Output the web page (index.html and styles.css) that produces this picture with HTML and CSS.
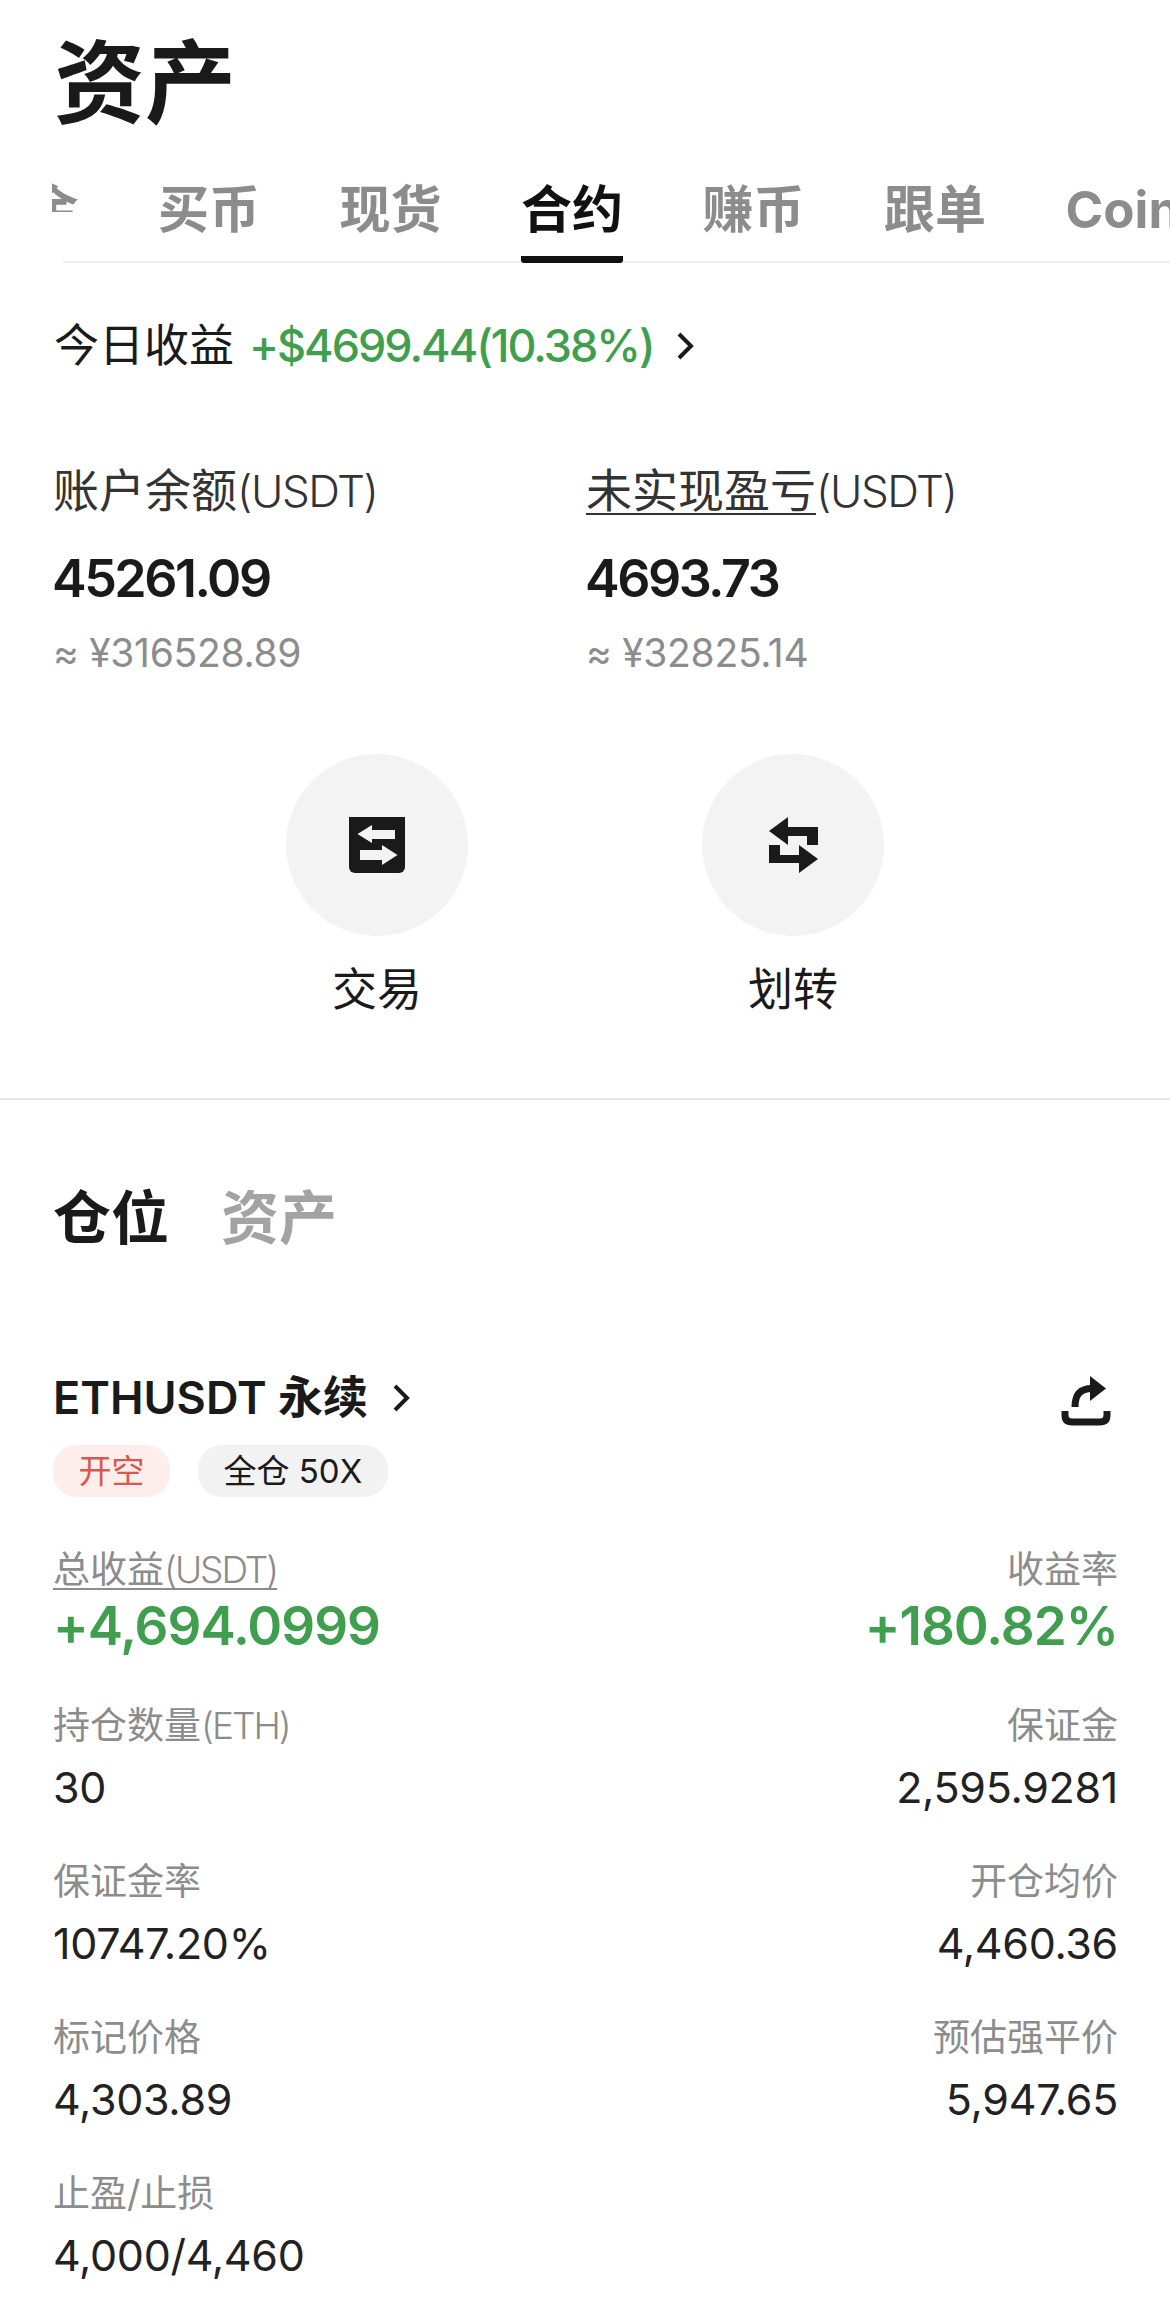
FILE: index.html
```html
<!DOCTYPE html>
<html lang="zh-CN">
<head>
<meta charset="utf-8">
<title>资产</title>
<link rel="stylesheet" href="styles.css">
</head>
<body>
<main class="page">
  <h1 class="title">资产</h1>
  <nav class="tabs">
    <span class="tab tab-clipped"><span class="tab-clip">资金</span></span>
    <span class="tab">买币</span>
    <span class="tab">现货</span>
    <span class="tab tab-active">合约</span>
    <span class="tab">赚币</span>
    <span class="tab">跟单</span>
    <span class="tab">Coin</span>
  </nav>

  <div class="today">
    <span>今日收益</span>
    <span class="today-value">+$4699.44(10.38%)</span>
    <svg class="chev chev-today" viewBox="0 0 18 28"><path d="M3 2l12 12L3 26"/></svg>
  </div>

  <section class="balances">
    <div class="balance">
      <div class="balance-label">账户余额<span class="latin">(USDT)</span></div>
      <div class="balance-value">45261.09</div>
      <div class="balance-fiat">≈ ¥316528.89</div>
    </div>
    <div class="balance">
      <div class="balance-label"><u>未实现盈亏</u><span class="latin">(USDT)</span></div>
      <div class="balance-value">4693.73</div>
      <div class="balance-fiat">≈ ¥32825.14</div>
    </div>
  </section>

  <section class="actions">
    <div class="action">
      <div class="action-circle">
        <svg class="icon-trade" viewBox="0 0 56 56">
          <path class="fill-dark" d="M0 0h56v50a6 6 0 0 1-6 6H6a6 6 0 0 1-6-6z"/>
          <path class="fill-light" d="M8.500 17L23 8v5h23v9H23v4z"/>
          <path class="fill-light" d="M48.500 38L33 28v5H11v10h22v5z"/>
        </svg>
      </div>
      <div class="action-label">交易</div>
    </div>
    <div class="action">
      <div class="action-circle">
        <svg class="icon-transfer" viewBox="0 0 49 56">
          <path class="fill-dark" d="M0 14L19 0v10h30v18H38v-9H19v9z"/>
          <path class="fill-dark" d="M49 42L30 56V46H0V28h11v10h19V28z"/>
        </svg>
      </div>
      <div class="action-label">划转</div>
    </div>
  </section>

  <section class="positions">
    <div class="seg">
      <span class="seg-item seg-active">仓位</span>
      <span class="seg-item">资产</span>
    </div>

    <div class="pos-head">
      <div class="pos-name"><span>ETHUSDT 永续</span><svg class="chev chev-pos" viewBox="0 0 18 28"><path d="M3 2l12 12L3 26"/></svg></div>
      <svg class="icon-share" viewBox="0 0 50 52">
        <path class="fill-dark" d="M29 2l16 12.500L29 27z"/>
        <path class="stroke-dark" d="M31 14.500C19 14.500 14 21 14 33"/>
        <path class="stroke-dark" d="M4 37v4q0 7 7 7h28q7 0 7-7v-4"/>
      </svg>
    </div>

    <div class="pills">
      <span class="pill pill-short">开空</span>
      <span class="pill">全仓 50X</span>
    </div>

    <div class="summary">
      <div class="cell">
        <div class="label"><u>总收益<span class="latin">(USDT)</span></u></div>
        <div class="big">+4,694.0999</div>
      </div>
      <div class="cell cell-right">
        <div class="label">收益率</div>
        <div class="big">+180.82%</div>
      </div>
    </div>

    <div class="grid">
      <div class="cell"><div class="label">持仓数量<span class="latin">(ETH)</span></div><div class="value">30</div></div>
      <div class="cell cell-right"><div class="label">保证金</div><div class="value">2,595.9281</div></div>
      <div class="cell"><div class="label">保证金率</div><div class="value">10747.20%</div></div>
      <div class="cell cell-right"><div class="label">开仓均价</div><div class="value">4,460.36</div></div>
      <div class="cell"><div class="label">标记价格</div><div class="value">4,303.89</div></div>
      <div class="cell cell-right"><div class="label">预估强平价</div><div class="value">5,947.65</div></div>
      <div class="cell"><div class="label">止盈/止损</div><div class="value">4,000/4,460</div></div>
    </div>
  </section>
</main>
</body>
</html>
```
FILE: styles.css
```css
* { box-sizing: border-box; }
html, body { margin: 0; padding: 0; background: #fff; }
body {
  font-family: Inter, "Noto Sans CJK SC", sans-serif;
  color: #1a1a1a;
}
.page { width: 1170px; height: 2309px; overflow: hidden; }

.title {
  margin: 0;
  padding: 28px 0 0 54px;
  font-size: 91px;
  font-weight: 700;
  line-height: 110px;
}

.tabs {
  display: flex;
  gap: 79.500px;
  height: 125px;
  margin: 0 0 0 52px;
  padding-top: 42px;
  overflow: hidden;
  white-space: nowrap;
  background: linear-gradient(#efefef, #efefef) 11px 123px / 100% 2px no-repeat;
}
.tab {
  flex: none;
  height: 83px;
  font-size: 51px;
  font-weight: 700;
  line-height: 60px;
  color: #8c8c8c;
}
.tab-clipped { width: 102px; margin-left: -75.500px; }
.tab-clip { display: block; height: 32px; overflow: hidden; }
.tab-active { color: #111; border-bottom: 7px solid #111; border-radius: 0 0 3px 3px; }

.today {
  display: flex;
  align-items: center;
  height: 60px;
  margin-top: 53px;
  padding-left: 54px;
  font-size: 45px;
  line-height: 60px;
}
.today-value {
  margin-left: 15px;
  color: #3f9f4f;
  font-weight: 500;
  letter-spacing: -2px;
}
.chev { fill: none; stroke: #1a1a1a; stroke-width: 4; }
.chev-today { width: 18px; height: 28px; margin-left: 22px; }

.balances { display: flex; margin-top: 84px; padding-left: 53px; }
.balance { width: 533px; }
.balance-label { font-size: 46px; line-height: 60px; color: #333; }
.balance-label u { text-decoration-thickness: 2px; text-underline-offset: 6px; }
.balance-label .latin { font-size: 44px; letter-spacing: -1.400px; font-weight: 300; }
.balance-value { margin-top: 28px; margin-left: -1px; font-size: 52px; font-weight: 600; line-height: 60px; letter-spacing: -2.500px; }
.balance-fiat { margin-top: 21px; font-size: 39px; line-height: 46px; color: #8c8c8c; letter-spacing: -0.300px; }

.actions { display: flex; gap: 234px; margin-top: 78px; padding-left: 286px; }
.action { width: 182px; display: flex; flex-direction: column; align-items: center; }
.action-circle {
  width: 182px;
  height: 182px;
  border-radius: 50%;
  background: #f3f3f3;
  display: flex;
  align-items: center;
  justify-content: center;
}
.icon-trade { width: 56px; height: 56px; }
.icon-transfer { width: 49px; height: 56px; }
.fill-dark { fill: #1a1a1a; }
.fill-light { fill: #f3f3f3; }
.stroke-dark { fill: none; stroke: #1a1a1a; stroke-width: 7; }
.action-label { margin-top: 24px; font-size: 45px; line-height: 60px; }

.positions { margin-top: 78px; padding: 0 52px 0 53px; border-top: 2px solid #e6e6e6; }
.seg { display: flex; gap: 52px; margin-top: 83px; }
.seg-item { font-size: 58px; font-weight: 700; line-height: 70px; color: #a3a3a3; }
.seg-active { color: #1a1a1a; }

.pos-head { display: flex; justify-content: space-between; align-items: center; margin-top: 121px; height: 52px; padding-right: 7px; }
.pos-name { display: flex; align-items: center; margin-top: -5px; font-size: 45px; font-weight: 600; line-height: 52px; }
.chev-pos { width: 18px; height: 28px; margin-left: 24px; }
.icon-share { width: 50px; height: 52px; }

.pills { display: flex; gap: 28px; margin-top: 19px; }
.pill {
  height: 52px;
  padding: 0 25.500px;
  border-radius: 24px;
  background: #f2f2f2;
  font-size: 33px;
  line-height: 52px;
}
.pill-short { background: #fdedeb; color: #d8584c; }

.summary { display: flex; justify-content: space-between; margin-top: 48px; }
.cell-right { text-align: right; }
.label { font-size: 37px; line-height: 50px; color: #8c8c8c; }
.label u { text-decoration-thickness: 2px; text-underline-offset: 5px; }
.label .latin { letter-spacing: -2px; font-weight: 300; }
.big { font-size: 53px; font-weight: 600; line-height: 62px; color: #3f9f4f; letter-spacing: -1px; }

.grid { display: grid; grid-template-columns: 1fr 1fr; row-gap: 45px; margin-top: 44px; }
.value { margin-top: 11px; font-size: 43px; line-height: 50px; color: #222; letter-spacing: -0.300px; }
```
